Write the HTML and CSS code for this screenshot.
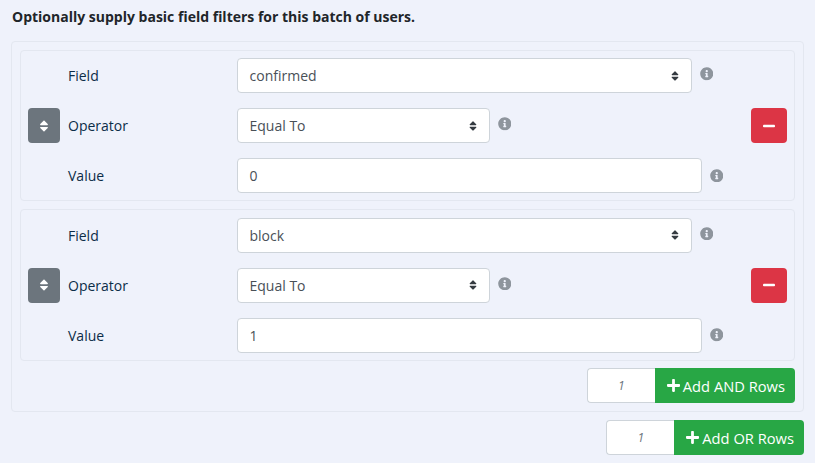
FILE: index.html
```html
<!DOCTYPE html>
<html lang="en">
<head>
<meta charset="utf-8">
<title>Batch filters</title>
<link rel="stylesheet" href="styles.css">
</head>
<body>
<svg class="defs" width="0" height="0" aria-hidden="true">
  <symbol id="i-info" viewBox="0 0 512 512"><path fill-rule="evenodd" d="M256 8C119 8 8 119 8 256s111 248 248 248 248-111 248-248S393 8 256 8zm0 110c23.200 0 42 18.800 42 42s-18.800 42-42 42-42-18.800-42-42 18.800-42 42-42zm56 254c0 6.600-5.400 12-12 12h-88c-6.600 0-12-5.400-12-12v-24c0-6.600 5.400-12 12-12h12v-64h-12c-6.600 0-12-5.400-12-12v-24c0-6.600 5.400-12 12-12h64c6.600 0 12 5.400 12 12v100h12c6.600 0 12 5.400 12 12v24z"/></symbol>
  <symbol id="i-sort" viewBox="0 0 320 512"><path d="M41 288h238c21.400 0 32.100 25.900 17 41L177 448c-9.400 9.400-24.600 9.400-33.900 0L24 329c-15.100-15.100-4.400-41 17-41zm255-105L177 64c-9.400-9.400-24.600-9.400-33.900 0L24 183c-15.100 15.100-4.400 41 17 41h238c21.400 0 32.100-25.900 17-41z"/></symbol>
  <symbol id="i-minus" viewBox="0 0 448 512"><path d="M416 208H32c-17.700 0-32 14.300-32 32v32c0 17.700 14.300 32 32 32h384c17.700 0 32-14.300 32-32v-32c0-17.700-14.300-32-32-32z"/></symbol>
  <symbol id="i-plus" viewBox="0 0 448 512"><path d="M416 208H272V64c0-17.700-14.300-32-32-32h-32c-17.700 0-32 14.300-32 32v144H32c-17.700 0-32 14.300-32 32v32c0 17.700 14.300 32 32 32h144v144c0 17.700 14.300 32 32 32h32c17.700 0 32-14.300 32-32V304h144c17.700 0 32-14.300 32-32v-32c0-17.700-14.300-32-32-32z"/></symbol>
</svg>

<p class="intro">Optionally supply basic field filters for this batch of users.</p>

<div class="or-group">
  <div class="and-group and-first">
    <div class="handle-cell"><button class="btn btn-handle" type="button"><svg class="ic-sort"><use href="#i-sort"/></svg></button></div>
    <div class="fields">
      <div class="row">
        <span class="label">Field</span>
        <div class="control control-wide"><span class="box select">confirmed<svg class="caret"><use href="#i-sort"/></svg></span></div>
        <svg class="info"><use href="#i-info"/></svg>
      </div>
      <div class="row">
        <span class="label">Operator</span>
        <div class="control control-short"><span class="box select">Equal To<svg class="caret"><use href="#i-sort"/></svg></span></div>
        <svg class="info"><use href="#i-info"/></svg>
      </div>
      <div class="row">
        <span class="label">Value</span>
        <div class="control control-full"><span class="box">0</span></div>
        <svg class="info info-low"><use href="#i-info"/></svg>
      </div>
    </div>
    <div class="delete-cell"><button class="btn btn-delete" type="button"><svg class="ic-minus"><use href="#i-minus"/></svg></button></div>
  </div>

  <div class="and-group">
    <div class="handle-cell"><button class="btn btn-handle" type="button"><svg class="ic-sort"><use href="#i-sort"/></svg></button></div>
    <div class="fields">
      <div class="row">
        <span class="label">Field</span>
        <div class="control control-wide"><span class="box select">block<svg class="caret"><use href="#i-sort"/></svg></span></div>
        <svg class="info"><use href="#i-info"/></svg>
      </div>
      <div class="row">
        <span class="label">Operator</span>
        <div class="control control-short"><span class="box select">Equal To<svg class="caret"><use href="#i-sort"/></svg></span></div>
        <svg class="info"><use href="#i-info"/></svg>
      </div>
      <div class="row">
        <span class="label">Value</span>
        <div class="control control-full"><span class="box">1</span></div>
        <svg class="info info-low"><use href="#i-info"/></svg>
      </div>
    </div>
    <div class="delete-cell"><button class="btn btn-delete" type="button"><svg class="ic-minus"><use href="#i-minus"/></svg></button></div>
  </div>

  <div class="add-row add-and">
    <span class="count">1</span>
    <button class="btn btn-add" type="button"><svg class="ic-plus"><use href="#i-plus"/></svg>Add AND Rows</button>
  </div>
</div>

<div class="add-row add-or">
  <span class="count">1</span>
  <button class="btn btn-add" type="button"><svg class="ic-plus"><use href="#i-plus"/></svg>Add OR Rows</button>
</div>
</body>
</html>
```
FILE: styles.css
```css
* { box-sizing: border-box; }
html, body { height: 100%; }
body {
  margin: 0;
  overflow: hidden;
  background: #eff2fb;
  color: #0c2d48;
  font-family: "Open Sans", "Noto Sans", sans-serif;
  font-size: 14px;
}
.defs { position: absolute; }
.intro {
  margin: 0;
  padding: 7px 12px 0;
  height: 41px;
  font-weight: 700;
  font-size: 14px;
  line-height: 20px;
  color: #212529;
}
.or-group {
  margin: 0 11px;
  padding: 8px 8px 7px;
  height: 371px;
  border: 1px solid #e3e7f0;
  border-radius: 4px;
}
.and-group {
  display: flex;
  align-items: center;
  height: 152px;
  margin-bottom: 7px;
  padding: 7px;
  border: 1px solid #e3e7f0;
  border-radius: 4px;
}
.and-first { height: 151px; margin-bottom: 8px; }
.handle-cell { width: 32px; flex: none; }
.fields { flex: 1; display: flex; flex-direction: column; gap: 15px; }
.delete-cell { width: 36px; flex: none; }
.row { display: flex; height: 35px; align-items: center; }
.label { width: 177px; padding-left: 8px; flex: none; }
.control { flex: none; }
.control-wide { width: 455px; }
.control-short { width: 253px; }
.control-full { width: 465px; }
.box {
  display: flex;
  align-items: center;
  justify-content: space-between;
  height: 35px;
  padding: 0 12px 0 11.5px;
  background: #fff;
  border: 1px solid #ced4da;
  border-radius: 4px;
  color: #495057;
}
.caret { width: 8px; height: 12px; fill: #343a40; }
.info { width: 13.5px; height: 13.5px; fill: #8e959d; margin: -3px 0 0 7.5px; }
.info-low { margin: 0 0 0 7.5px; }
.btn {
  display: inline-flex;
  align-items: center;
  justify-content: center;
  border: 0;
  border-radius: 4px;
  padding: 0;
  font: inherit;
  color: #fff;
}
.btn-handle { width: 32px; height: 35px; background: #6c757d; }
.btn-delete { width: 36px; height: 35px; background: #dc3545; }
.ic-sort { width: 10px; height: 14px; fill: #fff; }
.ic-minus { width: 12px; height: 14px; fill: #fff; }
.add-row { display: flex; justify-content: flex-end; height: 35px; }
.count {
  width: 68px;
  display: flex;
  align-items: center;
  justify-content: center;
  background: #fff;
  border: 1px solid #ced4da;
  border-right: 0;
  border-radius: 4px 0 0 4px;
  color: #6c757d;
  font-style: italic;
  font-size: 12px;
}
.btn-add {
  height: 35px;
  padding: 0 10px 0 12px;
  background: #28a745;
  border-radius: 0 4px 4px 0;
  gap: 3px;
  font-size: 14.7px;
}
.add-or { margin: 8px 11px 0 0; }
.ic-plus { width: 13px; height: 15px; fill: #fff; }
```
